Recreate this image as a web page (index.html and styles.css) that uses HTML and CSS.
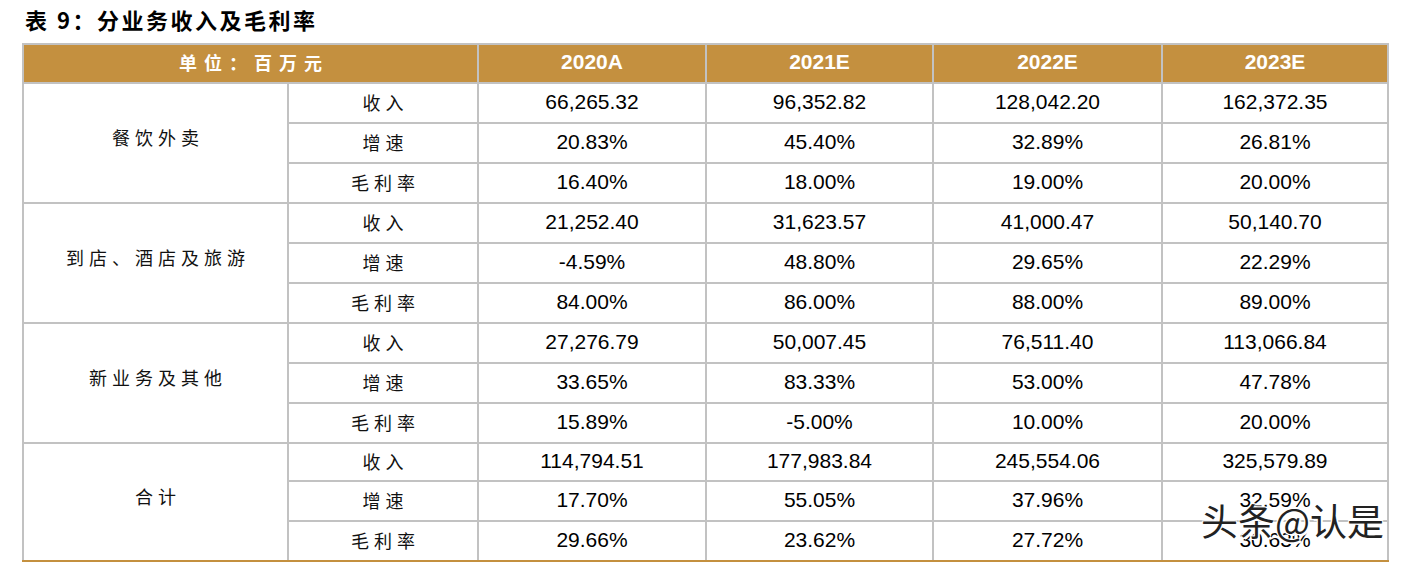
FILE: index.html
```html
<!DOCTYPE html>
<html lang="zh-CN">
<head>
<meta charset="utf-8">
<title>表 9：分业务收入及毛利率</title>
<link rel="stylesheet" href="styles.css">
</head>
<body>
<div class="page">
  <h1 class="title">表 9：分业务收入及毛利率</h1>
  <table class="fin">
    <colgroup>
      <col class="c-group">
      <col class="c-item">
      <col class="c-y1">
      <col class="c-y2">
      <col class="c-y3">
      <col class="c-y4">
    </colgroup>
    <thead>
      <tr>
        <th colspan="2" class="unit">单位：百万元</th>
        <th>2020A</th>
        <th>2021E</th>
        <th>2022E</th>
        <th>2023E</th>
      </tr>
    </thead>
    <tbody>
      <tr>
        <td rowspan="3" class="grp">餐饮外卖</td>
        <td class="lbl">收入</td>
        <td>66,265.32</td><td>96,352.82</td><td>128,042.20</td><td>162,372.35</td>
      </tr>
      <tr>
        <td class="lbl">增速</td>
        <td>20.83%</td><td>45.40%</td><td>32.89%</td><td>26.81%</td>
      </tr>
      <tr>
        <td class="lbl">毛利率</td>
        <td>16.40%</td><td>18.00%</td><td>19.00%</td><td>20.00%</td>
      </tr>
      <tr>
        <td rowspan="3" class="grp">到店、酒店及旅游</td>
        <td class="lbl">收入</td>
        <td>21,252.40</td><td>31,623.57</td><td>41,000.47</td><td>50,140.70</td>
      </tr>
      <tr>
        <td class="lbl">增速</td>
        <td>-4.59%</td><td>48.80%</td><td>29.65%</td><td>22.29%</td>
      </tr>
      <tr>
        <td class="lbl">毛利率</td>
        <td>84.00%</td><td>86.00%</td><td>88.00%</td><td>89.00%</td>
      </tr>
      <tr>
        <td rowspan="3" class="grp">新业务及其他</td>
        <td class="lbl">收入</td>
        <td>27,276.79</td><td>50,007.45</td><td>76,511.40</td><td>113,066.84</td>
      </tr>
      <tr>
        <td class="lbl">增速</td>
        <td>33.65%</td><td>83.33%</td><td>53.00%</td><td>47.78%</td>
      </tr>
      <tr>
        <td class="lbl">毛利率</td>
        <td>15.89%</td><td>-5.00%</td><td>10.00%</td><td>20.00%</td>
      </tr>
      <tr class="short">
        <td rowspan="3" class="grp last">合计</td>
        <td class="lbl">收入</td>
        <td>114,794.51</td><td>177,983.84</td><td>245,554.06</td><td>325,579.89</td>
      </tr>
      <tr>
        <td class="lbl">增速</td>
        <td>17.70%</td><td>55.05%</td><td>37.96%</td><td>32.59%</td>
      </tr>
      <tr class="last-row">
        <td class="lbl">毛利率</td>
        <td>29.66%</td><td>23.62%</td><td>27.72%</td><td>30.63%</td>
      </tr>
    </tbody>
  </table>
  <div class="watermark">头条@认是</div>
</div>
</body>
</html>
```

FILE: styles.css
```css
html, body {
  margin: 0;
  padding: 0;
  background: #ffffff;
}

.page {
  position: relative;
  width: 1404px;
  height: 562px;
  overflow: hidden;
  padding: 4px 0 0 22px;
  box-sizing: border-box;
}

.title {
  margin: 0 0 9px 3px;
  font-family: "Noto Sans CJK SC", sans-serif;
  font-weight: 700;
  font-size: 22px;
  line-height: 30px;
  letter-spacing: 2.5px;
  color: #000;
}

.fin {
  border-collapse: collapse;
  table-layout: fixed;
  width: 1365px;
}

.c-group { width: 265px; }
.c-item { width: 190px; }
.c-y1 { width: 228px; }
.c-y2 { width: 227px; }
.c-y3 { width: 229px; }
.c-y4 { width: 226px; }

.fin th,
.fin td {
  border: 2px solid #c2c2c2;
  padding: 0 0 3px 0;
  text-align: center;
  vertical-align: middle;
}

.fin th {
  background: #c4903f;
  color: #ffffff;
  height: 34px;
  font-family: "Liberation Sans", Arial, sans-serif;
  font-weight: 700;
  font-size: 21px;
}

.fin th.unit {
  font-family: "Noto Sans CJK SC", sans-serif;
  font-size: 18px;
  font-weight: 700;
  letter-spacing: 7px;
  padding-left: 7px;
}

.fin td {
  height: 35px;
  font-family: "Liberation Sans", Arial, sans-serif;
  font-size: 21px;
  color: #000;
}

.fin tr.short td:not(.grp) {
  height: 33px;
}

.fin td.lbl,
.fin td.grp {
  font-family: "Noto Sans CJK SC", sans-serif;
  font-size: 18px;
  letter-spacing: 5px;
  padding-left: 5px;
  color: #111;
}

.fin td.grp {
  padding-bottom: 12px;
}

.fin tr.last-row td,
.fin td.grp.last {
  border-bottom: 3px solid #c4903f;
}

.watermark {
  position: absolute;
  left: 1201px;
  top: 496px;
  font-family: "Noto Sans CJK SC", sans-serif;
  font-size: 37px;
  line-height: 48px;
  color: #222;
  text-shadow: 2px 2px 0 #ffffff, -1px -1px 0 #ffffff, 1px -1px 0 #ffffff, -1px 1px 0 #ffffff;
}
```
